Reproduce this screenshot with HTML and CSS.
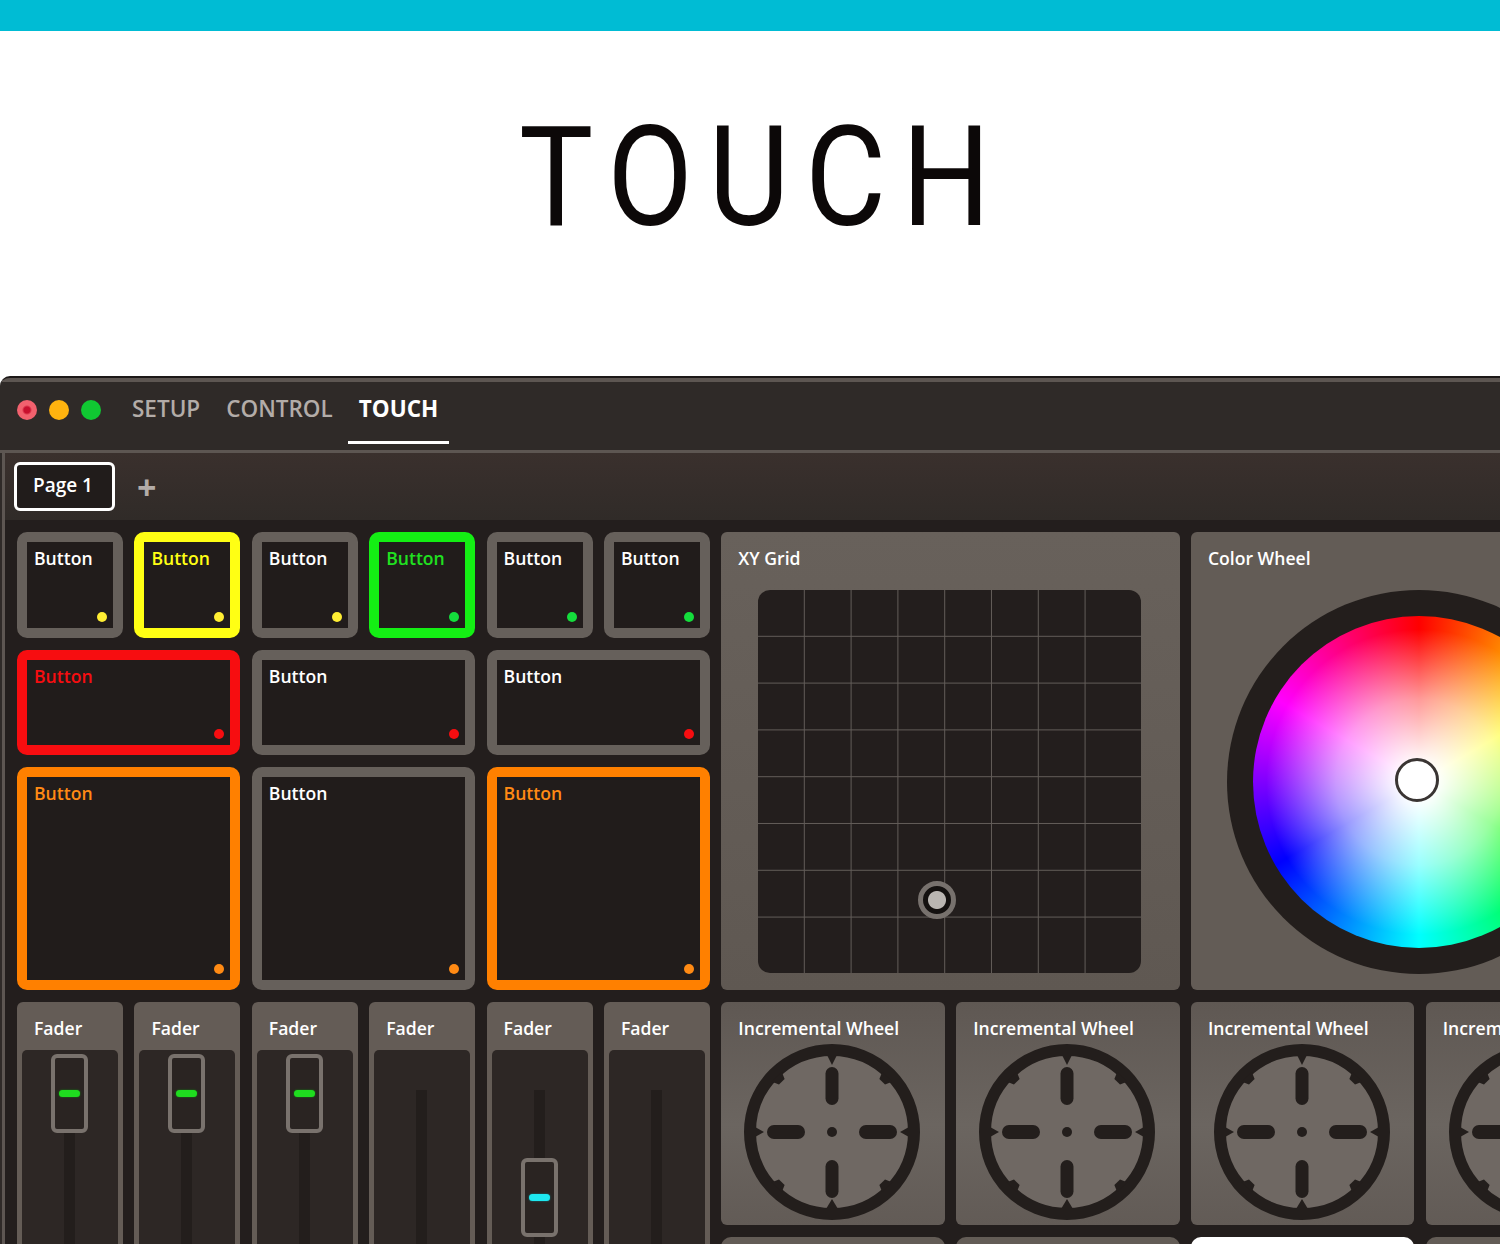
FILE: index.html
```html
<!DOCTYPE html>
<html lang="en">
<head>
  <meta charset="UTF-8">
  <meta name="viewport" content="width=device-width, initial-scale=1.0">
  <title>Touch</title>
  <link rel="stylesheet" href="styles.css">
</head>
<body>
  <div class="top-bar"></div>

  <div class="hero">
    <h1>TOUCH</h1>
  </div>

  <div class="window">
    <div class="titlebar">
      <span class="light light-red"></span>
      <span class="light light-yellow"></span>
      <span class="light light-green"></span>
      <nav class="nav">
        <a class="nav-item">SETUP</a>
        <a class="nav-item">CONTROL</a>
        <a class="nav-item active">TOUCH</a>
      </nav>
    </div>

    <div class="content">
      <div class="pagebar">
        <span class="page-tab">Page 1</span>
        <span class="page-add">+</span>
      </div>

      <div class="board">
        <!-- row 1 -->
        <div class="btn"><span>Button</span><i class="dot d-yellow"></i></div>
        <div class="btn on-yellow"><span>Button</span><i class="dot d-yellow"></i></div>
        <div class="btn"><span>Button</span><i class="dot d-yellow"></i></div>
        <div class="btn on-green"><span>Button</span><i class="dot d-green"></i></div>
        <div class="btn"><span>Button</span><i class="dot d-green"></i></div>
        <div class="btn"><span>Button</span><i class="dot d-green"></i></div>

        <div class="panel xy">
          <div class="label">XY Grid</div>
          <div class="xy-grid">
            <div class="xy-handle"></div>
          </div>
        </div>

        <div class="panel color">
          <div class="label">Color Wheel</div>
          <div class="color-ring">
            <div class="color-wheel">
              <div class="color-handle"></div>
            </div>
          </div>
        </div>

        <!-- row 2 -->
        <div class="btn wide on-red"><span>Button</span><i class="dot d-red"></i></div>
        <div class="btn wide"><span>Button</span><i class="dot d-red"></i></div>
        <div class="btn wide"><span>Button</span><i class="dot d-red"></i></div>

        <!-- row 3 -->
        <div class="btn big on-orange"><span>Button</span><i class="dot d-orange"></i></div>
        <div class="btn big"><span>Button</span><i class="dot d-orange"></i></div>
        <div class="btn big on-orange"><span>Button</span><i class="dot d-orange"></i></div>

        <!-- faders -->
        <div class="panel fader">
          <div class="label">Fader</div>
          <div class="fader-well"><div class="fader-track"></div><div class="fader-handle"><i class="pill"></i></div></div>
        </div>
        <div class="panel fader">
          <div class="label">Fader</div>
          <div class="fader-well"><div class="fader-track"></div><div class="fader-handle"><i class="pill"></i></div></div>
        </div>
        <div class="panel fader">
          <div class="label">Fader</div>
          <div class="fader-well"><div class="fader-track"></div><div class="fader-handle"><i class="pill"></i></div></div>
        </div>
        <div class="panel fader">
          <div class="label">Fader</div>
          <div class="fader-well"><div class="fader-track"></div></div>
        </div>
        <div class="panel fader">
          <div class="label">Fader</div>
          <div class="fader-well"><div class="fader-track"></div><div class="fader-handle low"><i class="pill cyan"></i></div></div>
        </div>
        <div class="panel fader">
          <div class="label">Fader</div>
          <div class="fader-well"><div class="fader-track"></div></div>
        </div>

        <!-- wheels -->
        <div class="panel inc">
          <div class="label">Incremental Wheel</div>
          <svg class="inc-wheel" viewBox="0 0 176 176"><use href="#wheel"></use></svg>
        </div>
        <div class="panel inc">
          <div class="label">Incremental Wheel</div>
          <svg class="inc-wheel" viewBox="0 0 176 176"><use href="#wheel"></use></svg>
        </div>
        <div class="panel inc">
          <div class="label">Incremental Wheel</div>
          <svg class="inc-wheel" viewBox="0 0 176 176"><use href="#wheel"></use></svg>
        </div>
        <div class="panel inc">
          <div class="label">Incremental Wheel</div>
          <svg class="inc-wheel" viewBox="0 0 176 176"><use href="#wheel"></use></svg>
        </div>

        <!-- next row, cut off by the picture -->
        <div class="panel stub"></div>
        <div class="panel stub"></div>
        <div class="panel stub white"></div>
        <div class="panel stub"></div>
      </div>
    </div>
  </div>

  <svg class="defs" width="0" height="0">
    <defs>
      <g id="notches">
        <path d="M83 11h10l-5 10z"/>
        <path d="M82 165h12l-6-10z"/>
        <path d="M11 83v10l9-5z"/>
        <path d="M165 83v10l-9-5z"/>
      </g>
      <g id="nubs">
        <path d="M81 10h14l-3 7h-8z"/>
        <path d="M81 166h14l-3-7h-8z"/>
        <path d="M10 81v14l7-3v-8z"/>
        <path d="M166 81v14l-7-3v-8z"/>
      </g>
      <symbol id="wheel" viewBox="0 0 176 176">
        <circle cx="88" cy="88" r="82" fill="#6f6863" stroke="#231e1c" stroke-width="12"/>
        <g fill="#231e1c">
          <use href="#notches"/>
          <use href="#nubs" transform="rotate(45 88 88)"/>
          <rect x="81.5" y="23" width="13" height="38" rx="6.5"/>
          <rect x="81.5" y="116" width="13" height="38" rx="6.5"/>
          <rect x="23" y="81" width="38" height="14" rx="7"/>
          <rect x="115" y="81" width="38" height="14" rx="7"/>
          <circle cx="88" cy="88" r="5"/>
        </g>
      </symbol>
    </defs>
  </svg>
</body>
</html>
```

FILE: styles.css
```css
body {
  margin: 0;
  background: #fff;
  font-family: "Open Sans", Arial, sans-serif;
  overflow: hidden;
}

.top-bar {
  height: 31px;
  background: #00bcd4;
}

.hero {
  height: 345px;
  display: flex;
  justify-content: center;
}
h1 {
  margin: 64px 0 0 26px;
  font-family: Roboto, sans-serif;
  font-weight: 400;
  font-size: 140px;
  line-height: 164px;
  letter-spacing: 17.5px;
  color: #0c0808;
  transform: scaleX(.89);
}

/* app window */
.window {
  height: 868px;
  overflow: hidden;
  background: #2f2a28;
  border-top: 2px solid #1c1817;
  border-top-left-radius: 10px;
  box-sizing: border-box;
}
.titlebar {
  height: 75px;
  display: flex;
  box-sizing: border-box;
  padding-left: 17px;
  border-top: 4px solid #5d5652;
  border-bottom: 3px solid #5d5652;
}
.light {
  width: 20px;
  height: 20px;
  border-radius: 50%;
  margin: 18px 12px 0 0;
}
.light-red {
  background: radial-gradient(circle, #c8102e 0 3px, #f2616e 5px);
}
.light-yellow {
  background: #ffb30f;
}
.light-green {
  background: #10c832;
}
.nav {
  display: flex;
  gap: 4px;
  margin-left: 8px;
}
.nav-item {
  height: 62px;
  box-sizing: border-box;
  padding: 15px 11px 0;
  font-size: 22.5px;
  font-weight: 600;
  line-height: 24px;
  color: #b3aca8;
}
.nav-item.active {
  color: #fff;
  font-weight: 700;
  border-bottom: 3px solid #fff;
}

.content {
  border-left: 3px solid #5d5652;
  margin-left: 2px;
}
.pagebar {
  height: 67px;
  display: flex;
  align-items: center;
  gap: 22px;
  padding-left: 9px;
  box-sizing: border-box;
  background: linear-gradient(#3a302d, #302b28);
}
.page-tab {
  width: 101px;
  height: 49px;
  box-sizing: border-box;
  border: 3px solid #fff;
  border-radius: 6px;
  background: #211c1b;
  color: #fff;
  font-size: 19px;
  font-weight: 600;
  line-height: 41px;
  text-align: center;
  padding-right: 3px;
}
.page-add {
  color: #b3aca8;
  font-size: 34px;
  font-weight: 700;
  line-height: 32px;
}

/* control grid */
.board {
  display: grid;
  grid-template-columns: repeat(14, 106px);
  grid-auto-rows: 105.5px;
  gap: 12px 11.4px;
  padding: 12px 0 0 12px;
  background: #231e1d;
  height: 800px;
}

.btn {
  display: flex;
  flex-direction: column;
  justify-content: space-between;
  box-sizing: border-box;
  border: 10px solid #66605b;
  border-radius: 10px;
  background: #211c1b;
  padding: 4px 6px 6px 7px;
  color: #fff;
  font-size: 17.6px;
  font-weight: 600;
  line-height: 24px;
}
.btn span {
  display: block;
}
.btn.wide {
  grid-column: span 2;
}
.btn.big {
  grid-column: span 2;
  grid-row: span 2;
}
.on-yellow {
  border-color: #ffff14;
  color: #ffff14;
}
.on-green {
  border-color: #14ee14;
  color: #20e020;
}
.on-red {
  border-color: #f70d10;
  color: #f70d10;
}
.on-orange {
  border-color: #ff8000;
  color: #ff8a14;
}
.dot {
  display: block;
  width: 10px;
  height: 10px;
  border-radius: 50%;
  align-self: flex-end;
}
.d-yellow {
  background: #ffee33;
}
.d-green {
  background: #14dd3c;
}
.d-red {
  background: #f70d10;
}
.d-orange {
  background: #ff8a14;
}

.panel {
  background: #635c56;
  border-radius: 6px;
  display: flex;
  flex-direction: column;
}
.label {
  padding: 14px 0 0 17px;
  height: 39px;
  box-sizing: border-box;
  color: #fff;
  font-size: 17.6px;
  font-weight: 600;
  line-height: 24px;
  white-space: nowrap;
}

/* xy grid */
.panel.xy {
  grid-column: span 4;
  grid-row: span 4;
  background: linear-gradient(#68615b, #5f5852);
}
.xy-grid {
  position: relative;
  width: 383px;
  height: 383px;
  margin: 19px 0 0 37px;
  border-radius: 12px;
  background: #231e1d;
}
/* 7 lines each way, the last cell is wider than the others */
.xy-grid::before,
.xy-grid::after {
  content: "";
  position: absolute;
  inset: 0;
}
.xy-grid::before {
  right: 55px;
  background: linear-gradient(to right, transparent 46px, #625c58 46px) 0 0 / 46.8px 100%;
}
.xy-grid::after {
  bottom: 55px;
  background: linear-gradient(to bottom, transparent 46px, #625c58 46px) 0 0 / 100% 46.8px;
}
.xy-handle {
  position: absolute;
  z-index: 1;
  left: 160px;
  top: 291px;
  width: 38px;
  height: 38px;
  box-sizing: border-box;
  border: 5px solid #77716d;
  border-radius: 50%;
  background: radial-gradient(circle, #bab6b2 0 8.5px, #141110 9.5px);
}

/* color wheel */
.panel.color {
  grid-column: span 4;
  grid-row: span 4;
}
.color-ring {
  width: 332px;
  height: 332px;
  padding: 26px;
  margin: 19px 0 0 36px;
  border-radius: 50%;
  background: #231e1c;
}
.color-wheel {
  position: relative;
  width: 332px;
  height: 332px;
  border-radius: 50%;
  background:
    radial-gradient(circle closest-side, #fff 0, #fff 10%, rgba(255,255,255,.6) 50%, rgba(255,255,255,0) 92%),
    conic-gradient(#f00, #ff0 60deg, #0f0 120deg, #0ff 180deg, #00f 240deg, #f0f 300deg, #f00);
}
.color-handle {
  position: absolute;
  left: 142px;
  top: 142px;
  width: 44px;
  height: 44px;
  box-sizing: border-box;
  border: 3px solid #3a3533;
  border-radius: 50%;
  background: #fff;
}

/* faders */
.panel.fader {
  grid-row: span 3;
  background: #645c56;
}
.label + .fader-well {
  margin-top: 9px;
}
.fader-well {
  position: relative;
  flex: 1;
  margin: 0 5px;
  background: #2d2725;
  border-radius: 5px 5px 0 0;
}
.fader-track {
  position: absolute;
  left: 42px;
  top: 40px;
  bottom: 0;
  width: 11px;
  background: #231e1c;
}
.fader-handle {
  position: absolute;
  left: 29px;
  top: 4px;
  width: 37px;
  height: 79px;
  box-sizing: border-box;
  border: 4px solid #79726d;
  border-radius: 6px;
  background: #2a2422;
  display: flex;
  align-items: center;
  justify-content: center;
}
.fader-handle.low {
  top: 108px;
}
.pill {
  display: block;
  width: 21px;
  height: 7px;
  border-radius: 4px;
  background: #1fdc1f;
  box-shadow: 0 0 2px #0f8f0f;
}
.pill.cyan {
  background: #1ee8f0;
  box-shadow: 0 0 2px #0e8a90;
}

/* incremental wheels */
.panel.inc {
  grid-column: span 2;
  grid-row: span 2;
  background: linear-gradient(#5f5853, #6b6560 55%, #625b56);
}
.inc-wheel {
  display: block;
  width: 176px;
  height: 176px;
  margin: 3px 0 0 23px;
}

.panel.stub {
  grid-column: span 2;
  border-radius: 10px 10px 0 0;
}
.panel.stub.white {
  background: #fff;
}

.defs {
  position: absolute;
}
```
